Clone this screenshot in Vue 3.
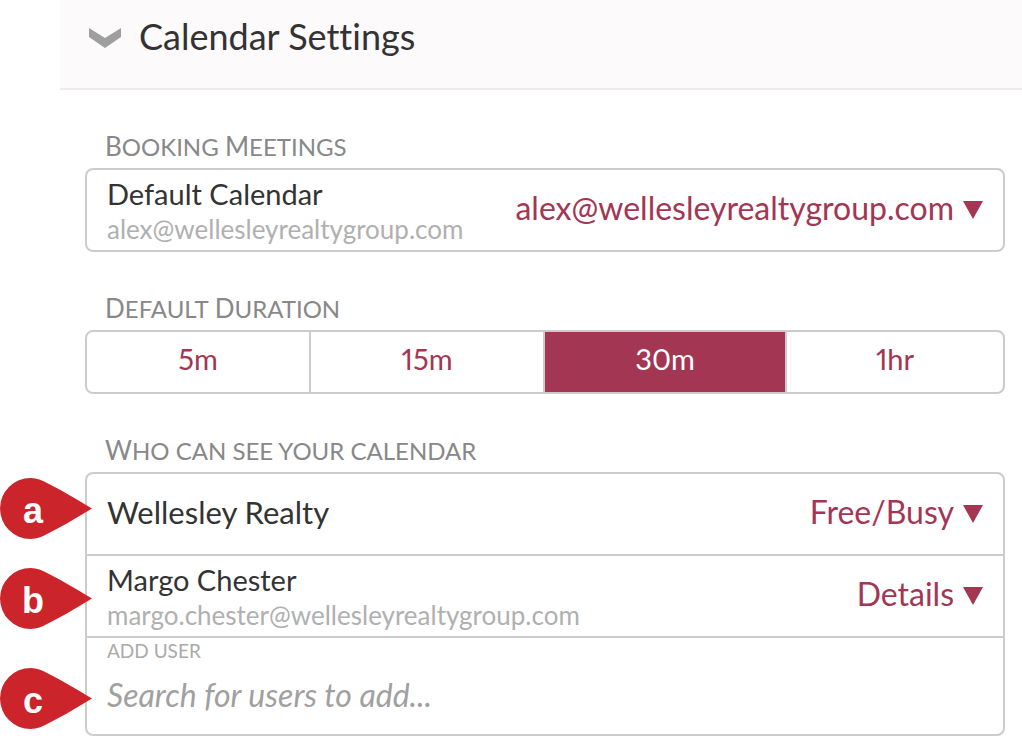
<script setup>
import { ref } from 'vue'

const expanded = ref(true)
const calendar = ref('alex@wellesleyrealtygroup.com')
const durations = ['5m', '15m', '30m', '1hr']
const duration = ref('30m')
const query = ref('')
const accessLevels = ['Free/Busy', 'Details']
const viewers = ref([
  { pin: 'a', name: 'Wellesley Realty', email: '', access: 'Free/Busy' },
  { pin: 'b', name: 'Margo Chester', email: 'margo.chester@wellesleyrealtygroup.com', access: 'Details' },
])
</script>

<template>
  <main class="page">
    <h1 class="header">
      <button class="toggle" type="button" :aria-expanded="expanded" @click="expanded = !expanded">
        <svg class="chevron" viewBox="0 0 32 20" aria-hidden="true">
          <path d="M0 0 16 10 32 0V9L16 20 0 9Z" />
        </svg>
        <span>Calendar Settings</span>
      </button>
    </h1>

    <div v-show="expanded" class="body">
      <section>
        <h2 class="caption"><span class="word">Booking</span> <span class="word">Meetings</span></h2>
        <div class="box">
          <div class="row">
            <div class="who">
              <label class="name" for="calendar">Default Calendar</label>
              <span class="email">alex@wellesleyrealtygroup.com</span>
            </div>
            <div class="picker">
              <select id="calendar" v-model="calendar">
                <option>alex@wellesleyrealtygroup.com</option>
              </select>
              <svg class="arrow" viewBox="0 0 20 18" aria-hidden="true"><path d="M0 0H20L10 18Z" /></svg>
            </div>
          </div>
        </div>
      </section>

      <section>
        <h2 class="caption"><span class="word">Default</span> <span class="word">Duration</span></h2>
        <div class="box segments" role="group" aria-label="Default Duration">
          <button
            v-for="d in durations"
            :key="d"
            type="button"
            class="segment"
            :class="{ active: d === duration }"
            :aria-pressed="d === duration"
            @click="duration = d"
          >{{ d }}</button>
        </div>
      </section>

      <section>
        <h2 class="caption"><span class="word">Who</span> can see your calendar</h2>
        <div class="box">
          <div v-for="v in viewers" :key="v.pin" class="row">
            <div class="pin" :class="'pin-' + v.pin">
              <svg viewBox="0 0 92 61" aria-hidden="true"><path d="M92 30.500C75 20 59 11 48 5.500C42 2.200 37 0 30.500 0A30.500 30.500 0 0 0 30.500 61C37 61 42 58.800 48 55.500C59 50 75 41 92 30.500Z" /></svg>
              <span>{{ v.pin }}</span>
            </div>
            <div class="who">
              <label class="name" :class="{ single: !v.email }" :for="'access-' + v.pin">{{ v.name }}</label>
              <span v-if="v.email" class="email">{{ v.email }}</span>
            </div>
            <div class="picker">
              <select :id="'access-' + v.pin" v-model="v.access">
                <option v-for="level in accessLevels" :key="level">{{ level }}</option>
              </select>
              <svg class="arrow" viewBox="0 0 20 18" aria-hidden="true"><path d="M0 0H20L10 18Z" /></svg>
            </div>
          </div>
          <div class="row add">
            <div class="pin pin-c">
              <svg viewBox="0 0 92 61" aria-hidden="true"><path d="M92 30.500C75 20 59 11 48 5.500C42 2.200 37 0 30.500 0A30.500 30.500 0 0 0 30.500 61C37 61 42 58.800 48 55.500C59 50 75 41 92 30.500Z" /></svg>
              <span>c</span>
            </div>
            <label class="add-label" for="search">ADD USER</label>
            <input id="search" v-model="query" class="search" type="text" placeholder="Search for users to add..." />
          </div>
        </div>
      </section>
    </div>
  </main>
</template>

<style>
body {
  margin: 0;
  background: #fff;
}
</style>

<style scoped>
.page {
  padding-left: 60px;
  font-family: Lato, "Open Sans", sans-serif;
  font-variant-ligatures: none;
  color: #333;
}
.page * {
  box-sizing: border-box;
}
.header {
  margin: 0;
  padding: 12px 29px 28px;
  background: #fcfafb;
  border-bottom: 2px solid #ececec;
}
.toggle {
  display: flex;
  align-items: center;
  gap: 18px;
  padding: 0;
  border: 0;
  background: none;
  color: inherit;
  font: 400 36px/48px Lato, "Open Sans", sans-serif;
  font-variant-ligatures: none;
}
.chevron {
  width: 32px;
  height: 20px;
  margin-top: 4px;
  fill: #9f9f9f;
}
.body {
  padding: 0 17px 12px 25px;
}
.caption {
  margin: 0;
  padding: 40px 20px 4px;
  color: #888;
  font-size: 24px;
  line-height: 34px;
  font-weight: 400;
  text-transform: uppercase;
}
.word {
  display: inline-block;
  line-height: 24px;
}
.word::first-letter {
  font-size: 26px;
}
.box {
  border: 2px solid #ccc;
  border-radius: 8px;
}
.row {
  position: relative;
  display: flex;
  align-items: center;
  justify-content: space-between;
  min-height: 80px;
  padding: 0 20px;
}
.row + .row {
  border-top: 2px solid #ccc;
  min-height: 82px;
}
.who {
  display: flex;
  flex-direction: column;
}
.name {
  padding-top: 2px;
  font-size: 29px;
  line-height: 36px;
}
.name.single {
  padding: 0 0 4px;
  font-size: 31px;
}
.email {
  color: #b0b0b0;
  font-size: 26px;
  line-height: 34px;
}
.picker {
  position: relative;
  display: flex;
  align-items: center;
}
.picker select {
  appearance: none;
  field-sizing: content;
  padding: 0 29px 4px 0;
  border: 0;
  background: none;
  color: #a33652;
  font: 400 32px/40px Lato, "Open Sans", sans-serif;
}
.arrow {
  position: absolute;
  right: 0;
  width: 20px;
  height: 18px;
  fill: #a33652;
  pointer-events: none;
}
.segments {
  display: grid;
  grid-template-columns: 222fr 234fr 242fr 218fr;
  overflow: hidden;
}
.segment {
  padding: 0 0 6px;
  border: 0;
  background: none;
  color: #a33652;
  font: 400 29px/54px Lato, "Open Sans", sans-serif;
  font-variant-numeric: proportional-nums;
}
.segment + .segment {
  border-left: 2px solid #ccc;
}
.segment.active {
  background: #a33652;
  background-clip: padding-box;
  color: #fff;
}
.add {
  flex-direction: column;
  align-items: stretch;
  justify-content: flex-start;
  padding-bottom: 12px;
}
.add-label {
  color: #aaa;
  font-size: 19px;
  line-height: 26px;
}
.search {
  width: 100%;
  height: 58px;
  padding: 2px 0 0;
  border: 0;
  outline: 0;
  background: none;
  color: #333;
  font: italic 400 32px/40px Lato, "Open Sans", sans-serif;
}
.search::placeholder {
  color: #a0a0a0;
  opacity: 1;
}
.pin {
  position: absolute;
  left: -87px;
  width: 92px;
  height: 61px;
}
.pin svg {
  display: block;
  width: 100%;
  height: 100%;
  fill: #cc242b;
}
.pin span {
  position: absolute;
  left: 0;
  top: 0;
  width: 66px;
  color: #fff;
  font: 700 36px/66px "Liberation Sans", Arial, sans-serif;
  text-align: center;
}
.pin-a {
  top: 4px;
}
.pin-b {
  top: 12px;
}
.pin-c {
  top: 30px;
}
</style>
